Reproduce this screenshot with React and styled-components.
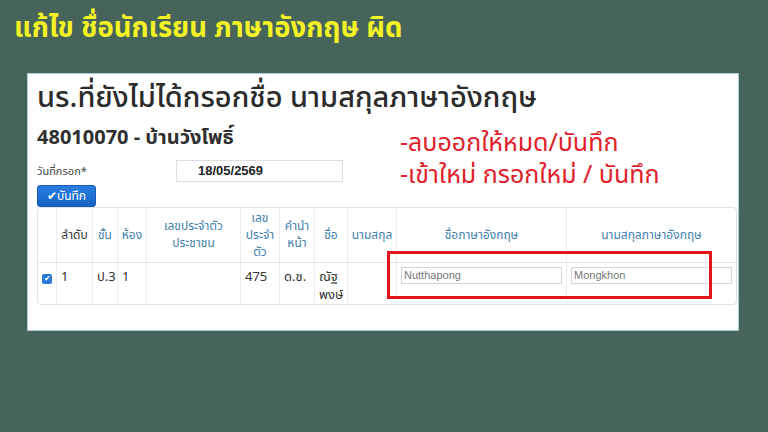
import React from 'react'
import styled, { createGlobalStyle } from 'styled-components'

const thai = `"Noto Sans Thai", "Noto Sans Thai UI", "Noto Sans", "Liberation Sans", sans-serif`

const GlobalStyle = createGlobalStyle`
  html, body {
    margin: 0;
    padding: 0;
    background: #46645a;
  }
  body {
    width: 768px;
    height: 432px;
    overflow: hidden;
    font-family: ${thai};
  }
`

const Slide = styled.div`
  display: flex;
  flex-direction: column;
  padding: 10px 0 0 14px;
`

const SlideTitle = styled.h1`
  margin: 0;
  font-size: 27.5px;
  line-height: 38px;
  font-weight: 700;
  color: #f2f224;
`

const Panel = styled.div`
  margin: 25px 0 0 13px;
  width: 712px;
  height: 258px;
  background: #fff;
  border: 1px solid #a9cfdd;
  padding: 4px 0 0 9px;
  box-sizing: border-box;
  color: #333;
`

const Heading = styled.h2`
  margin: 0;
  font-size: 29px;
  line-height: 40px;
  font-weight: 500;
  color: #2b2b2b;
`

const TopRow = styled.div`
  display: flex;
  margin-top: 6px;
`

const FormColumn = styled.div`
  width: 363px;
  display: flex;
  flex-direction: column;
`

const SchoolCode = styled.div`
  font-size: 20px;
  font-weight: 700;
  line-height: 28px;
  color: #2f2f2f;
`

const DateRow = styled.div`
  display: flex;
  align-items: center;
  margin-top: 8px;
`

const DateLabel = styled.label`
  width: 139px;
  font-size: 11px;
  color: #444;
`

const DateInput = styled.div`
  width: 167px;
  height: 22px;
  box-sizing: border-box;
  border: 1px solid #ddd;
  padding-left: 21px;
  font-size: 13px;
  font-weight: 700;
  line-height: 20px;
  color: #222;
  font-family: "Liberation Sans", sans-serif;
`

const SaveButton = styled.button`
  align-self: flex-start;
  margin-top: 3px;
  width: 59px;
  height: 22px;
  padding: 0;
  border: 1px solid #1559b0;
  border-radius: 3px;
  background: linear-gradient(#2a7fe0, #1463c4);
  color: #fff;
  font-family: ${thai};
  font-size: 12px;
  line-height: 20px;
`

const Notes = styled.div`
  display: flex;
  flex-direction: column;
  padding-top: 3px;
`

const Note = styled.div`
  font-size: 25px;
  line-height: 32px;
  color: #e2202a;
`

const TableWrap = styled.div`
  position: relative;
  width: 698px;
`

const Table = styled.table`
  width: 698px;
  table-layout: fixed;
  border-collapse: separate;
  border-spacing: 0;
  border: 1px solid #e2e2e2;
  border-radius: 4px;
`

const Th = styled.th`
  height: 54px;
  padding: 0 1px;
  font-size: 12px;
  font-weight: 400;
  line-height: 17px;
  text-align: center;
  vertical-align: middle;
  white-space: nowrap;
  color: ${p => (p.plain ? '#333' : '#3f7fb0')};
  border-left: ${p => (p.first ? 'none' : '1px solid #ececec')};
  border-bottom: 1px solid #e4e4e4;
`

const Td = styled.td`
  height: 36px;
  padding: 5px 4px 0;
  vertical-align: top;
  font-size: 13px;
  line-height: 18px;
  color: #333;
  border-left: ${p => (p.first ? 'none' : '1px solid #ececec')};
`

const Check = styled.span`
  display: inline-block;
  width: 10px;
  height: 10px;
  margin-top: 1px;
  border-radius: 2px;
  background: #2a78d8;
  color: #fff;
  font-size: 8px;
  line-height: 10px;
  text-align: center;
`

const NameInput = styled.div`
  height: 17px;
  margin-top: -1px;
  box-sizing: border-box;
  border: 1px solid #d6d6d6;
  padding-left: 2px;
  font-family: "Liberation Sans", sans-serif;
  font-size: 11px;
  line-height: 15px;
  color: #777;
`

const Highlight = styled.div`
  position: absolute;
  left: 350px;
  top: 44px;
  width: 325px;
  height: 48px;
  box-sizing: border-box;
  border: 3px solid #e3141c;
`

const columns = [
  { w: 18, label: '', first: true },
  { w: 36, label: 'ลำดับ', plain: true },
  { w: 25, label: 'ชั้น' },
  { w: 29, label: 'ห้อง' },
  { w: 94, label: <>เลขประจำตัว<br />ประชาชน</> },
  { w: 39, label: <>เลข<br />ประจำ<br />ตัว</> },
  { w: 35, label: <>คำนำ<br />หน้า</> },
  { w: 33, label: 'ชื่อ' },
  { w: 49, label: 'นามสกุล' },
  { w: 170, label: 'ชื่อภาษาอังกฤษ' },
  { w: 170, label: 'นามสกุลภาษาอังกฤษ' },
]

export default function App() {
  return (
    <>
      <GlobalStyle />
      <Slide>
        <SlideTitle>แก้ไข ชื่อนักเรียน ภาษาอังกฤษ ผิด</SlideTitle>
        <Panel>
          <Heading>นร.ที่ยังไม่ได้กรอกชื่อ นามสกุลภาษาอังกฤษ</Heading>
          <TopRow>
            <FormColumn>
              <SchoolCode>48010070 - บ้านวังโพธิ์</SchoolCode>
              <DateRow>
                <DateLabel>วันที่กรอก*</DateLabel>
                <DateInput>18/05/2569</DateInput>
              </DateRow>
              <SaveButton>✔บันทึก</SaveButton>
            </FormColumn>
            <Notes>
              <Note>-ลบออกให้หมด/บันทึก</Note>
              <Note>-เข้าใหม่ กรอกใหม่ / บันทึก</Note>
            </Notes>
          </TopRow>
          <TableWrap>
            <Table>
              <colgroup>
                {columns.map((c, i) => (
                  <col key={i} style={{ width: c.w }} />
                ))}
              </colgroup>
              <thead>
                <tr>
                  {columns.map((c, i) => (
                    <Th key={i} first={c.first} plain={c.plain}>
                      {c.label}
                    </Th>
                  ))}
                </tr>
              </thead>
              <tbody>
                <tr>
                  <Td first>
                    <Check>✔</Check>
                  </Td>
                  <Td>1</Td>
                  <Td>ป.3</Td>
                  <Td>1</Td>
                  <Td />
                  <Td>475</Td>
                  <Td>ด.ช.</Td>
                  <Td>ณัฐ<br />พงษ์</Td>
                  <Td />
                  <Td>
                    <NameInput>Nutthapong</NameInput>
                  </Td>
                  <Td>
                    <NameInput>Mongkhon</NameInput>
                  </Td>
                </tr>
              </tbody>
            </Table>
            <Highlight />
          </TableWrap>
        </Panel>
      </Slide>
    </>
  )
}
